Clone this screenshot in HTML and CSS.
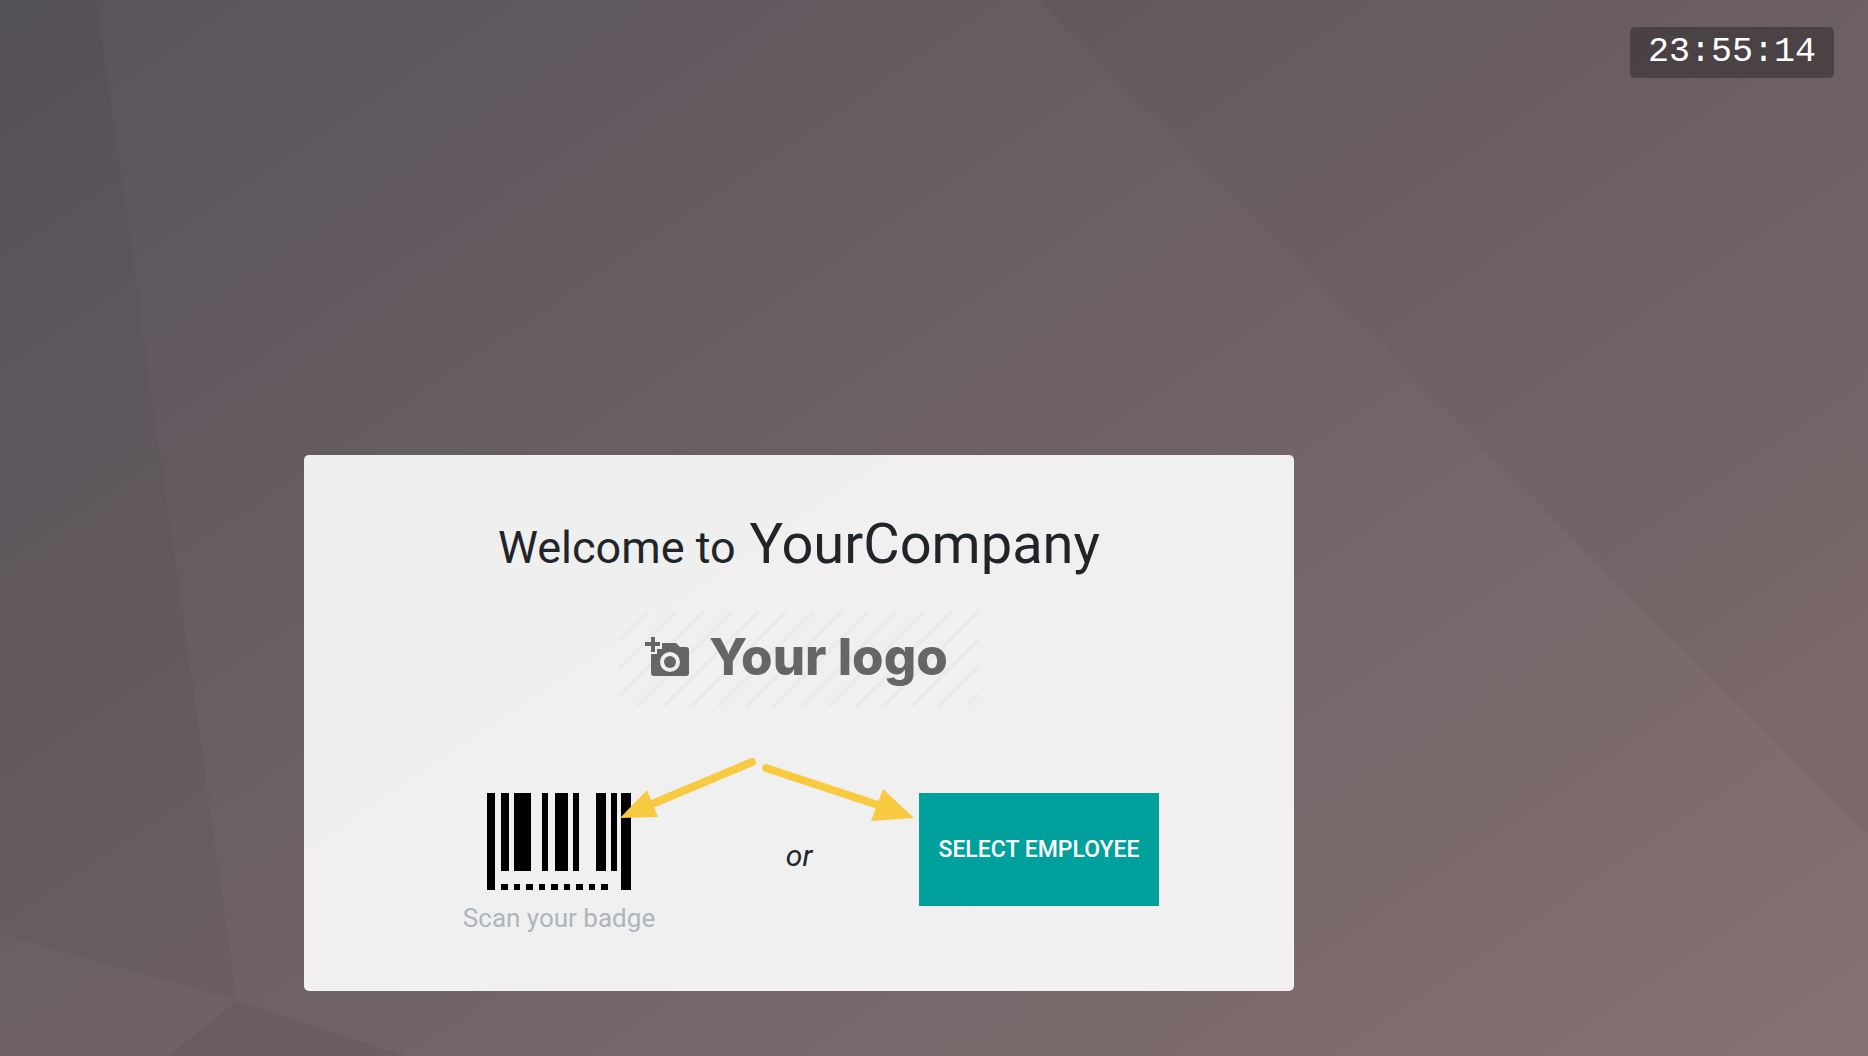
FILE: index.html
```html
<!DOCTYPE html>
<html lang="en">
<head>
<meta charset="utf-8">
<title>Attendance Kiosk</title>
<link rel="stylesheet" href="styles.css">
</head>
<body>
<div class="kiosk">
  <svg class="backdrop" viewBox="0 0 1868 1056" preserveAspectRatio="none" aria-hidden="true">
    <path class="shade" d="M0 0H97L237 1001L0 934Z"/>
    <path class="shade-strong" d="M237 1001L406 1056H168Z"/>
    <path class="shade" d="M1036 0H1868V835Z"/>
  </svg>
  <header class="topbar">
    <time class="clock">23:55:14</time>
  </header>
  <main class="card">
    <h1 class="welcome">Welcome to<span class="company"> YourCompany</span></h1>
    <div class="logo">
      <svg class="logo-stripes" viewBox="0 0 360 96" aria-hidden="true">
        <path d="M-66 96l96-96M-38 96l96-96M-11 96l96-96M17 96l96-96M44 96l96-96M72 96l96-96M99 96l96-96M127 96l96-96M154 96l96-96M182 96l96-96M209 96l96-96M237 96l96-96M264 96l96-96M292 96l96-96M319 96l96-96M347 96l96-96"/>
      </svg>
      <svg class="logo-camera" viewBox="0 0 44 40" aria-hidden="true">
        <path fill-rule="evenodd" d="M6 17h6v-5h5V6h14l4 4h6q3 0 3 3v23q0 3-3 3H9q-3 0-3-3ZM25 15a10 10 0 1 0 0 20a10 10 0 1 0 0-20Z"/>
        <path d="M6 0h4v5h5v4h-5v6H6V9H0V5h6Z"/>
        <circle cx="25" cy="25" r="6"/>
      </svg>
      <span class="logo-text">Your logo</span>
    </div>
    <section class="options">
      <div class="scan">
        <svg class="barcode" viewBox="0 0 144 97" aria-hidden="true">
          <path d="M0 0h8v97H0ZM14 0h8v78h-8ZM27 0h17v78H27ZM55 0h6v78h-6ZM68 0h13v78H68ZM86 0h6v78h-6ZM109 0h10v78h-10ZM124 0h6v78h-6ZM134 0h10v97h-10Z"/>
          <path d="M14 91h7v6h-7ZM27 91h6v6h-6ZM39 91h7v6h-7ZM52 91h6v6h-6ZM64 91h7v6h-7ZM77 91h6v6h-6ZM89 91h7v6h-7ZM102 91h6v6h-6ZM114 91h7v6h-7Z"/>
        </svg>
        <span class="scan-label">Scan your badge</span>
      </div>
      <em class="or">or</em>
      <button class="select" type="button">SELECT EMPLOYEE</button>
      <svg class="arrows" viewBox="0 0 296 64" aria-hidden="true">
        <path class="shaft" d="M132 6L32 48M146 12L258 49"/>
        <path class="head" d="M0 62L27 34L38 61ZM294 62L263 33L251 65Z"/>
      </svg>
    </section>
  </main>
</div>
</body>
</html>
```
FILE: styles.css
```css
* {
  box-sizing: border-box;
}

body {
  margin: 0;
  font-family: Roboto, "Liberation Sans", sans-serif;
  color: #212529;
}

.kiosk {
  position: relative;
  display: flex;
  flex-direction: column;
  min-height: 100vh;
  background: linear-gradient(146deg, #58545b, #857071);
}

.backdrop {
  position: absolute;
  inset: 0;
  width: 100%;
  height: 100%;
}

.shade {
  fill: rgba(0, 0, 0, 0.03);
}

.shade-strong {
  fill: rgba(0, 0, 0, 0.06);
}

.topbar {
  position: relative;
  display: flex;
  justify-content: flex-end;
  flex: 1;
  align-items: flex-start;
  padding: 27px 34px;
}

.clock {
  padding: 6px 18px;
  border-radius: 5px;
  background: rgba(0, 0, 0, 0.3);
  color: #fff;
  font: 35px/39px "Liberation Mono", monospace;
}

.card {
  position: relative;
  width: 53%;
  min-width: 760px;
  margin: 0 0 65px 304px;
  padding: 47px 48px 53px;
  border-radius: 5px;
  background: rgba(255, 255, 255, 0.9);
  display: flex;
  flex-direction: column;
  align-items: center;
}

.welcome {
  margin: 0 0 21px;
  font-size: 45px;
  font-weight: 400;
  line-height: 84px;
}

.company {
  font-size: 56px;
}

.logo {
  position: relative;
  display: flex;
  align-items: center;
  width: 360px;
  height: 96px;
  padding: 0 0 4px 26px;
  gap: 20px;
  color: #666;
}

.logo-stripes {
  position: absolute;
  inset: 0;
  fill: none;
  stroke: rgba(0, 0, 0, 0.025);
  stroke-width: 4;
}

.logo-camera {
  width: 44px;
  height: 40px;
  fill: #666;
}

.logo-text {
  font: 800 51px/60px Inter, sans-serif;
  white-space: nowrap;
}

.options {
  position: relative;
  display: grid;
  grid-template-columns: repeat(3, 240px);
  margin-top: 86px;
  align-items: start;
}

.scan {
  display: flex;
  flex-direction: column;
  align-items: center;
  gap: 8px;
}

.barcode {
  width: 144px;
  height: 97px;
}

.scan-label {
  font-size: 26px;
  line-height: 40px;
  color: #adb5bd;
}

.or {
  margin-top: 43px;
  font-size: 30px;
  line-height: 40px;
  text-align: center;
}

.select {
  height: 113px;
  padding: 0;
  border: 0;
  background: #00a09d;
  color: #fff;
  font: 500 23px/36px Roboto, sans-serif;
}

.arrows {
  position: absolute;
  left: 181px;
  top: -37px;
  width: 296px;
  height: 64px;
  overflow: visible;
}

.shaft {
  fill: none;
  stroke: #f8ca41;
  stroke-width: 8;
  stroke-linecap: round;
}

.head {
  fill: #f8ca41;
}
```
